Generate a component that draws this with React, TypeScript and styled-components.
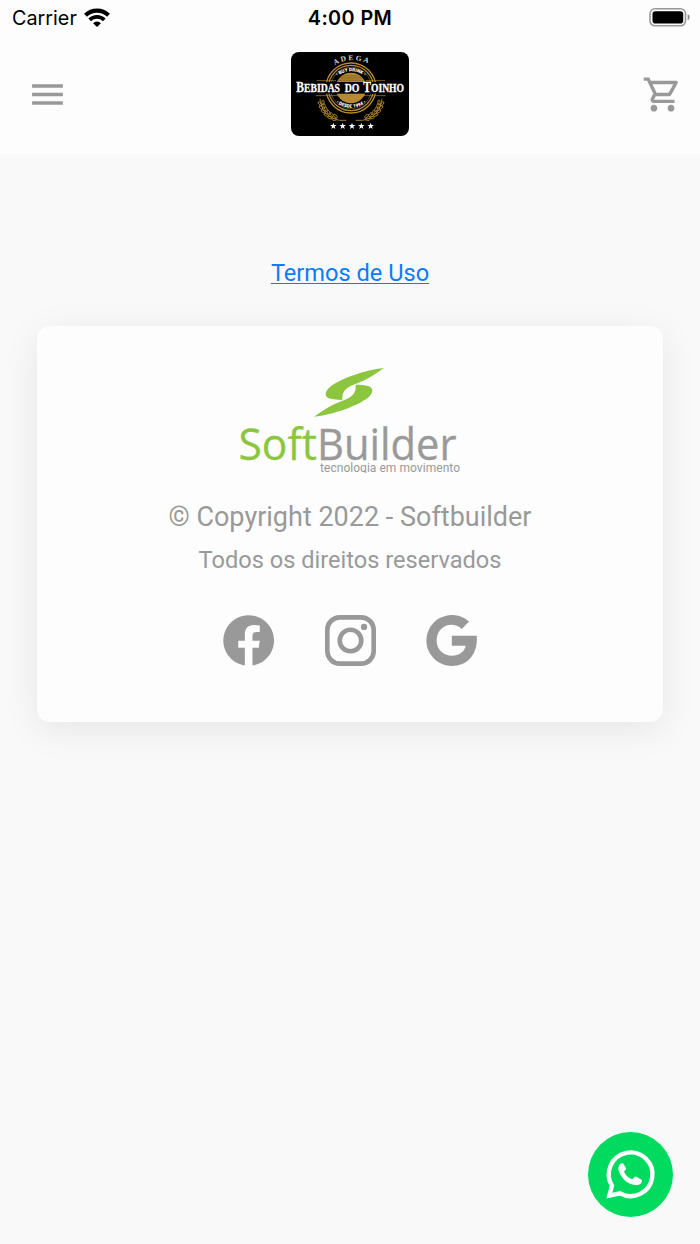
import styled, { createGlobalStyle } from 'styled-components';
import { MdMenu, MdOutlineShoppingCart } from 'react-icons/md';

const GlobalStyle = createGlobalStyle`
  * {
    box-sizing: border-box;
  }

  body {
    margin: 0;
    background: #f9f9f9;
    font-family: Roboto, "Liberation Sans", sans-serif;
  }

  svg {
    display: block;
  }
`;

const Screen = styled.div`
  min-height: 1244px;
  width: 700px;
  background: #f9f9f9;
`;

const Header = styled.header`
  height: 154px;
  background: #fdfdfd;
`;

const StatusBar = styled.div`
  display: grid;
  grid-template-columns: 1fr auto 1fr;
  align-items: center;
  height: 36px;
  padding: 0 9px 0 12px;
  color: #000;
  font-family: Inter, sans-serif;
  font-size: 19.8px;
`;

const Carrier = styled.div`
  display: flex;
  align-items: center;
  gap: 7px;
`;

const Clock = styled.span`
  margin-right: 3px;
  font-weight: 600;
  letter-spacing: 0.4px;
`;

const BatteryIcon = styled.svg`
  justify-self: end;
`;

const NavBar = styled.nav`
  display: grid;
  grid-template-columns: 1fr auto 1fr;
  align-items: center;
  height: 116px;
`;

const NavButton = styled.button<{ $side: 'left' | 'right' }>`
  display: flex;
  justify-self: ${({ $side }) => ($side === 'left' ? 'start' : 'end')};
  margin: ${({ $side }) => ($side === 'left' ? '0 0 0 27px' : '0 17px 0 0')};
  padding: 0;
  border: none;
  background: none;
  color: #999;
  font-size: 41px;
`;

const Main = styled.main`
  display: flex;
  flex-direction: column;
  align-items: center;
  padding-top: 104px;
`;

const TermsLink = styled.a`
  color: #0a7cff;
  font-size: 23.6px;
  line-height: 30px;
  text-decoration: underline;
  text-decoration-thickness: 1px;
  text-underline-offset: 2px;
`;

const Card = styled.section`
  display: flex;
  flex-direction: column;
  align-items: center;
  width: 626px;
  height: 396px;
  margin-top: 38px;
  padding-top: 34px;
  border-radius: 13px;
  background: #fdfdfd;
  box-shadow: 0 8px 36px rgba(0, 0, 0, 0.08);
  color: #999;
`;

const Copyright = styled.p`
  margin: 27px 0 0;
  font-size: 27px;
  line-height: 34px;
`;

const Rights = styled.p`
  margin: 11px 0 0;
  font-size: 23.6px;
  line-height: 30px;
`;

const SocialLinks = styled.div`
  display: flex;
  gap: 50.5px;
  margin-top: 40px;
`;

const WhatsappButton = styled.button`
  position: fixed;
  left: 588px;
  top: 1132px;
  width: 85px;
  height: 85px;
  padding: 0;
  border: none;
  border-radius: 50%;
  background: #00db5f;
`;

function WifiIcon() {
  return (
    <svg width="26" height="22" viewBox="0 0 26 22" fill="none" stroke="#000">
      <path d="M1.5 8.3a16.5 16.5 0 0 1 23 0" strokeWidth="4.2" />
      <path d="M5.7 12.8a10.4 10.4 0 0 1 14.6 0" strokeWidth="3.8" />
      <path d="M9.1 16.2a5.6 5.6 0 0 1 7.8 0L13 20z" fill="#000" stroke="none" />
    </svg>
  );
}

function Battery() {
  return (
    <BatteryIcon width="42" height="20" viewBox="0 0 42 20">
      <rect x="1" y="0.8" width="35.5" height="17" rx="5" fill="none" stroke="#999" strokeWidth="1.6" />
      <rect x="3.5" y="3.3" width="30.7" height="12.2" rx="2.8" fill="#000" />
      <path d="M38.7 6.3c2.5.6 2.5 5.4 0 6z" fill="#888" />
    </BatteryIcon>
  );
}

function Star({ x }: { x: number }) {
  return (
    <path
      transform={`translate(${x} 240) scale(1.1)`}
      d="M0-9 2.2-3 9-3 3.6 1.2 5.6 8 0 4-5.6 8-3.6 1.2-9-3-2.2-3z"
      fill="#fff"
    />
  );
}

function Laurel() {
  const leaves = [
    [109, 169, 70],
    [112, 180, 62],
    [118, 191, 52],
    [126, 201, 42],
    [136, 209, 30],
    [148, 214, 18],
  ];
  return (
    <g fill="none" stroke="#b58a32" strokeWidth="2.6">
      <path d="M105 158c2 30 22 60 59 65h20" />
      {leaves.map(([x, y, angle]) => (
        <g key={x} transform={`translate(${x} ${y}) rotate(${angle})`}>
          <ellipse cx="0" cy="-5" rx="7" ry="3.4" transform="rotate(22)" />
          <ellipse cx="0" cy="6" rx="7" ry="3.4" transform="rotate(-22)" />
        </g>
      ))}
    </g>
  );
}

function StoreLogo() {
  return (
    <svg width="118" height="84" viewBox="18 18 354 252">
      <defs>
        <path id="adega" d="M149 57Q198 28 262 57" />
        <path id="drink" d="M145 98Q198 54 250 98" />
        <path id="since" d="M144 164Q198 206 252 164" />
      </defs>
      <rect x="18" y="18" width="354" height="252" rx="24" fill="#000" />
      <g fill="none" stroke="#b58a32">
        <circle cx="198" cy="126" r="75" strokeWidth="4" />
        <circle cx="198" cy="126" r="68" strokeWidth="3.5" />
        <circle cx="198" cy="126" r="62" strokeWidth="1.5" />
      </g>
      <circle cx="198" cy="126" r="46" fill="#b58a32" />
      <path d="M163 99h68M158 104h78M165 94h64M173 89h48" stroke="#6b501a" strokeWidth="1.5" />
      <rect x="34" y="108" width="324" height="35" fill="#000" />
      <path d="M95 104h58M242 104h58M92 149h210" stroke="#b58a32" strokeWidth="2" />
      <Laurel />
      <g transform="matrix(-1 0 0 1 396 0)">
        <Laurel />
      </g>
      <g fill="#fff" stroke="#fff" strokeWidth="0.9" fontFamily="Liberation Serif, serif" fontWeight="700">
        <text x="34" y="138" fontSize="43" textLength="131" lengthAdjust="spacingAndGlyphs">
          B<tspan fontSize="36">EBIDAS</tspan>
        </text>
        <text x="179" y="138" fontSize="36" textLength="44" lengthAdjust="spacingAndGlyphs">
          DO
        </text>
        <text x="235" y="138" fontSize="43" textLength="122" lengthAdjust="spacingAndGlyphs">
          T<tspan fontSize="36">OINHO</tspan>
        </text>
      </g>
      <text fill="#ddd" fontFamily="Liberation Serif, serif" fontWeight="700" fontSize="22">
        <textPath href="#adega" textLength="104">ADEGA</textPath>
      </text>
      <g fill="#fff" fontFamily="Roboto, sans-serif" fontWeight="900" fontSize="14">
        <text>
          <textPath href="#drink" startOffset="50%" textAnchor="middle">• BUY DRINK •</textPath>
        </text>
        <text>
          <textPath href="#since" startOffset="50%" textAnchor="middle">• DESDE 1994 •</textPath>
        </text>
      </g>
      {[145, 173, 201, 229, 257].map((x) => (
        <Star key={x} x={x} />
      ))}
    </svg>
  );
}

function SoftBuilderLogo() {
  return (
    <svg width="240" height="113" viewBox="0 0 240 113">
      <g transform="scale(.3333) translate(240 12)" fill="#8cc63f">
        <path d="M222 12C165 18 94 43 61 68c-17 14-19 28-4 35 12 4 26 5 40 5-1-13 1-22 9-31 8-9 22-14 38-20 29-11 54-28 78-45z" />
        <path d="M12 158c57-6 128-31 161-56 17-14 19-28 4-35-12-4-26-5-40-5 1 13-1 22-9 31-8 9-22 14-38 20-29 11-54 28-78 45z" />
      </g>
      <g
        fontFamily="Open Sans, sans-serif"
        fontSize="44.5"
        strokeWidth="0.3"
      >
        <text x="8.5" y="99.5" fill="#8cc63f" stroke="#8cc63f" textLength="78.5" lengthAdjust="spacingAndGlyphs">
          Soft
        </text>
        <text x="87" y="99.5" fill="#999" stroke="#999" textLength="139.5" lengthAdjust="spacingAndGlyphs">
          Builder
        </text>
      </g>
      <text
        x="90"
        y="111.5"
        fill="#999"
        fontFamily="Roboto, sans-serif"
        fontSize="12"
        textLength="140"
      >
        tecnologia em movimento
      </text>
    </svg>
  );
}

function FacebookIcon() {
  return (
    <svg width="51" height="51" viewBox="0 0 154 154">
      <path
        fill="#999"
        d="M66 152.7A76.5 76.5 0 1 1 89 152.7V99h19l3-21H89V63c0-8 4-12 13-12h9V32c-6-1-11-2-17-2-19 0-28 11-28 29v19H46v21h20z"
      />
    </svg>
  );
}

function InstagramIcon() {
  return (
    <svg width="51" height="51" viewBox="0 0 154 154" fill="none" stroke="#999">
      <rect x="7" y="7" width="140" height="140" rx="38" strokeWidth="14" />
      <circle cx="77" cy="77" r="32.5" strokeWidth="14" />
      <circle cx="118" cy="36" r="9.5" fill="#999" stroke="none" />
    </svg>
  );
}

function GoogleIcon() {
  return (
    <svg width="51" height="51" viewBox="0 0 154 154">
      <path
        fill="#999"
        d="M78 63h75c5 52-25 91-75 91A77 77 0 1 1 130 20l-22 22C78 15 32 34 32 77c0 27 21 46 46 46 23 0 37-11 42-30H78z"
      />
    </svg>
  );
}

function WhatsappIcon() {
  return (
    <svg width="85" height="85" viewBox="0 0 255 255">
      <path
        d="M64 191 72 161A65.5 65.5 0 1 1 96 184z"
        fill="none"
        stroke="#fff"
        strokeWidth="13"
      />
      <path
        d="M105 94c-12-1-16 13-12 25 9 22 27 38 49 40 14 1 23-8 19-16l-16-9c-5-2-8 6-12 8-11-3-20-12-25-23 3-5 8-6 6-11z"
        fill="#fff"
      />
    </svg>
  );
}

export default function App() {
  return (
    <>
      <GlobalStyle />
      <Screen>
        <Header>
          <StatusBar>
            <Carrier>
              Carrier
              <WifiIcon />
            </Carrier>
            <Clock>4:00 PM</Clock>
            <Battery />
          </StatusBar>
          <NavBar>
            <NavButton $side="left" aria-label="Menu">
              <MdMenu />
            </NavButton>
            <StoreLogo />
            <NavButton $side="right" aria-label="Carrinho">
              <MdOutlineShoppingCart />
            </NavButton>
          </NavBar>
        </Header>
        <Main>
          <TermsLink href="#">Termos de Uso</TermsLink>
          <Card>
            <SoftBuilderLogo />
            <Copyright>© Copyright 2022 - Softbuilder</Copyright>
            <Rights>Todos os direitos reservados</Rights>
            <SocialLinks>
              <FacebookIcon />
              <InstagramIcon />
              <GoogleIcon />
            </SocialLinks>
          </Card>
        </Main>
        <WhatsappButton aria-label="WhatsApp">
          <WhatsappIcon />
        </WhatsappButton>
      </Screen>
    </>
  );
}
